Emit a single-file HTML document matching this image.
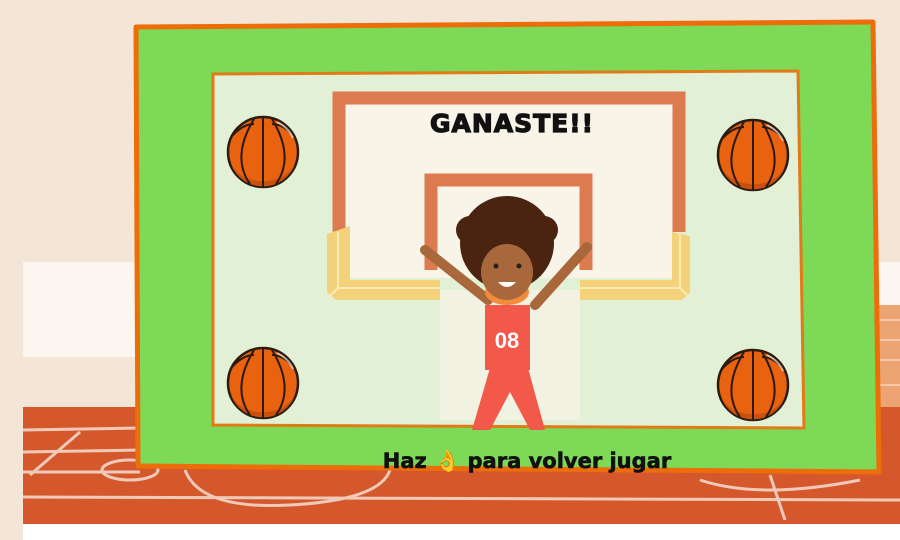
<!DOCTYPE html>
<html><head><meta charset="utf-8"><style>
*{margin:0;padding:0}
body{width:900px;height:540px;overflow:hidden;background:#f4e6d7;position:relative;font-family:"Liberation Sans",sans-serif}
</style></head><body>
<svg width="900" height="540" style="position:absolute;left:0;top:0">
<defs>
<g id="b">
<circle cx="0" cy="0" r="35" fill="#e8620f" stroke="#2a1a10" stroke-width="2.5"/>
<path d="M-32 12 A34 34 0 0 0 32 12 A34 26 0 0 1 -32 12Z" fill="#c9510d"/>
<g fill="none" stroke="#2a1a10" stroke-width="2"><line x1="0" y1="-35" x2="0" y2="35"/><path d="M-9 -33 Q-32 5 -13 32"/><path d="M9 -33 Q32 5 13 32"/><path d="M-31 -16 Q-20 -28 -9 -28"/><path d="M31 -16 Q20 -28 9 -28"/></g>
<path d="M14 -30 Q26 -24 30 -14" stroke="#fff" stroke-width="2" fill="none" opacity="0.6"/>
</g>
</defs>
<rect x="0" y="0" width="900" height="540" fill="#f4e6d7"/>
<rect x="23" y="262" width="877" height="95" fill="#fbf6ef"/>
<rect x="860" y="305" width="40" height="110" fill="#eca473"/>
<g stroke="#f6c9a6" stroke-width="2"><line x1="860" y1="320" x2="900" y2="320"/><line x1="860" y1="340" x2="900" y2="340"/><line x1="860" y1="360" x2="900" y2="360"/><line x1="860" y1="385" x2="900" y2="385"/></g>
<rect x="23" y="407" width="877" height="117" fill="#d5582d"/>
<rect x="23" y="524" width="877" height="16" fill="#ffffff"/>
<g stroke="#f3d7c8" stroke-width="3" fill="none" opacity="0.9">
<line x1="23" y1="430" x2="140" y2="428"/><line x1="23" y1="452" x2="140" y2="450"/>
<line x1="23" y1="472" x2="140" y2="472"/><line x1="23" y1="497" x2="900" y2="500"/>
<path d="M30 475 L80 432"/><ellipse cx="130" cy="470" rx="28" ry="10"/>
<path d="M185 470 Q200 510 290 505 Q380 500 390 470"/>
<path d="M700 480 Q760 500 860 480"/><line x1="770" y1="475" x2="785" y2="520"/>
</g>
<polygon points="136,27 873,22 879,472 138,466" fill="#7ed957" stroke="#ec6d0a" stroke-width="5" stroke-linejoin="round"/>
<polygon points="213,74 798,71 804,428 213,425" fill="#e2f0d5" stroke="#e07b18" stroke-width="3"/>
<!-- backboard -->
<rect x="339" y="98" width="340" height="180" fill="#f8f4e8"/>
<path d="M339 232 V98 H679 V232" fill="none" stroke="#dc7a50" stroke-width="13"/>
<path d="M431 270 V180 H586 V270" fill="none" stroke="#dc7a50" stroke-width="13"/>
<rect x="440" y="290" width="140" height="130" fill="#f5f2e4" opacity="0.8"/>
<!-- brackets -->
<path d="M327 234 L350 226 L350 280 L440 280 L440 300 L336 300 L327 292 Z" fill="#f3d27a"/>
<path d="M338 232 V288 H440 M338 288 L328 298" stroke="#fbeab8" stroke-width="2" fill="none"/>
<path d="M690 236 L672 232 L672 280 L580 280 L580 300 L682 300 L690 292 Z" fill="#f3d27a"/>
<path d="M680 234 V288 H580 M680 288 L690 298" stroke="#fbeab8" stroke-width="2" fill="none"/>
<!-- player -->
<g>
<path d="M425 250 L488 300" stroke="#a8683c" stroke-width="10" stroke-linecap="round"/>
<path d="M587 247 L535 305" stroke="#a8683c" stroke-width="10" stroke-linecap="round"/>
<polygon points="490,368 528,368 545,430 530,430 510,392 490,430 472,430" fill="#f2594a"/>
<rect x="485" y="305" width="45" height="65" fill="#f2594a"/>
<text x="507" y="348" font-size="22" font-weight="bold" fill="#fff" text-anchor="middle" font-family="Liberation Sans Narrow,Liberation Sans,sans-serif">08</text>
<ellipse cx="507" cy="292" rx="22" ry="13" fill="#f08c3a"/>
<circle cx="507" cy="243" r="47" fill="#4a2410"/>
<circle cx="470" cy="230" r="14" fill="#4a2410"/><circle cx="544" cy="230" r="14" fill="#4a2410"/>
<ellipse cx="507" cy="272" rx="26" ry="28" fill="#a8683c"/>
<circle cx="496" cy="266" r="2.5" fill="#222"/><circle cx="519" cy="266" r="2.5" fill="#222"/>
<path d="M498 282 Q507 292 516 282 Z" fill="#fff"/>
</g>
<use href="#b" x="263" y="152"/><use href="#b" x="753" y="155"/><use href="#b" x="263" y="383"/><use href="#b" x="753" y="385"/>
<text x="512" y="132" font-size="25" font-weight="900" text-anchor="middle" fill="#111" font-family="DejaVu Sans,sans-serif" stroke="#111" stroke-width="1.2" letter-spacing="1">GANASTE!!</text>
<text x="527" y="468" font-size="21" font-weight="bold" text-anchor="middle" fill="#111" stroke="#111" stroke-width="0.6" font-family="DejaVu Sans,sans-serif">Haz <tspan fill="#f2b820" stroke="#b07a00">👌</tspan> para volver jugar</text>
</svg>
</body></html>
